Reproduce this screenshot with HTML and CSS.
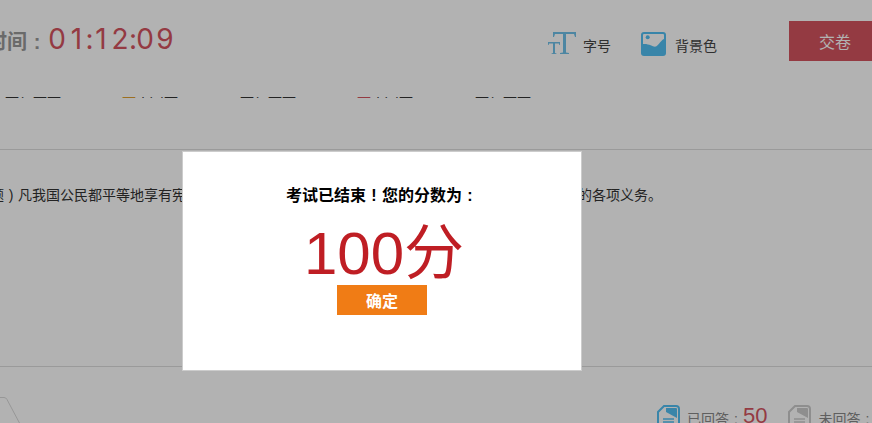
FILE: index.html
```html
<!DOCTYPE html>
<html lang="zh">
<head>
<meta charset="utf-8">
<title>考试</title>
<link rel="stylesheet" href="styles.css">
</head>
<body>
<div class="page">
  <header class="topbar">
    <div class="timer">
      <span class="timer-label">时间<span class="cw">:</span></span>
      <span class="timer-digits"><span>0</span><span>1</span><span>:</span><span>1</span><span>2</span><span>:</span><span>0</span><span>9</span></span>
    </div>
    <div class="tools">
      <div class="tool tool-size">
        <svg viewBox="0 0 28 22" width="28" height="22"><path fill="#6fc0e8" d="M5 0H28V5H27L26 2H18V20.500L21 21V22H12V21L15 20.500V2H7L6 5H5ZM0 10H12V13H11.300L11 11.500H7V21L8.500 21.500V22H3.500V21.500L5 21V11.500H1L.7 13H0Z"/></svg>
        <span>字号</span>
      </div>
      <div class="tool tool-bg">
        <svg viewBox="0 0 25 24" width="25" height="24"><rect width="25" height="24" rx="3" fill="#52bff3"/><path fill="#fff" d="M2 3a1 1 0 0 1 1-1h19a1 1 0 0 1 1 1v4c-3 1-5 6-8 7.500-3 1-6-3-13-2.500z"/><circle cx="6.700" cy="5.300" r="2" fill="#52bff3"/></svg>
        <span>背景色</span>
      </div>
    </div>
    <button class="submit">交卷</button>
  </header>
  <div class="strip">
    <div class="strip-text">
      <span>正，上正</span><span><b>上</b>小川正</span><span>正，上正</span><span><i>上</i>小川正</span><span>正，上正</span>
    </div>
  </div>
  <div class="rule"></div>
  <section class="question">（单选题<span class="cw">)</span>凡我国公民都平等地享有宪法和法律规定的各项权利，同时必须平等地履行宪法和法律规定的各项义务。</section>
  <footer class="footer">
    <svg class="tab" viewBox="0 0 24 27" width="24" height="27"><path fill="none" stroke="#d8d8d8" d="M0 .5H4Q6 .5 7 2.500L20 27"/></svg>
    <div class="stats">
      <svg class="doc doc-done" viewBox="0 0 23 26" width="23" height="26"><path class="doc-line" d="M7 1H19a3 3 0 0 1 3 3V26H1V7Z"/><path class="doc-fold" d="M9 3H19a1 1 0 0 1 1 1V13L9 7Z"/><path class="doc-rows" d="M6 14H17M6 17H17M6 20H17M6 23H17"/></svg>
      <span class="stat-label">已回答<span class="cw">:</span></span>
      <span class="stat-num">50</span>
      <svg class="doc doc-todo" viewBox="0 0 23 26" width="23" height="26"><path class="doc-line" d="M7 1H19a3 3 0 0 1 3 3V26H1V7Z"/><path class="doc-fold" d="M9 3H19a1 1 0 0 1 1 1V13L9 7Z"/><path class="doc-rows" d="M6 14H17M6 17H17M6 20H17M6 23H17"/></svg>
      <span class="stat-label">未回答<span class="cw">:</span></span>
    </div>
  </footer>
</div>
<div class="overlay"></div>
<div class="modal">
  <p class="modal-title">考试已结束<span class="cw">!</span>您的分数为<span class="cw">:</span></p>
  <p class="modal-score">100分</p>
  <button class="modal-ok">确定</button>
</div>
</body>
</html>
```
FILE: styles.css
```css
* { box-sizing: border-box; }
html, body { margin: 0; height: 100%; overflow: hidden; }
body { font-family: "Liberation Sans", "Noto Sans CJK SC", sans-serif; background: #fff; color: #333; }
.page { width: 872px; height: 423px; overflow: hidden; display: flex; flex-direction: column; }
.cw { display: inline-block; width: 1em; text-align: center; }

.topbar { height: 97px; display: flex; align-items: flex-start; flex: none; }
.timer { margin-left: -13px; margin-top: 26px; display: flex; flex: none; }
.timer-label { font-size: 20px; font-weight: bold; line-height: 32px; color: #999; white-space: nowrap; }
.timer-digits { display: grid; grid-template-columns: 20px 19px 7px 16px 22px 4px 20px 20px; justify-items: center; margin-top: -3px; font-family: Inter, sans-serif; font-size: 28px; line-height: 32px; color: #d4545f; }
.tools { display: flex; margin-left: 373px; margin-top: 32px; height: 26px; flex: none; }
.tool { display: flex; align-items: center; font-size: 14px; color: #444; }
.tool svg { align-self: flex-start; }
.tool-size { gap: 7px; }
.tool-bg { margin-left: 30px; gap: 9px; }
.submit { margin-left: auto; margin-right: -9px; margin-top: 21px; width: 92px; height: 40px; border: 0; padding: 0; background: #d4545f; color: #fff; font: 16px "Liberation Sans", "Noto Sans CJK SC", sans-serif; flex: none; }

.strip { height: 1px; flex: none; overflow: hidden; }
.strip-text { display: grid; grid-template-columns: 117px 118px 117px 118px 117px; padding-left: 5px; margin-top: -12px; font-size: 14px; line-height: 14px; white-space: nowrap; color: #333; }
.strip-text b { font-weight: normal; color: #e0a030; }
.strip-text i { font-style: normal; color: #d4545f; }
.rule { height: 52px; flex: none; border-bottom: 1px solid #ddd; }

.question { flex: 1; padding-top: 36px; margin-left: -52px; font-size: 14px; line-height: 18px; white-space: nowrap; color: #333; }

.footer { height: 57px; flex: none; border-top: 1px solid #ddd; display: flex; position: relative; }
.tab { position: absolute; left: 0; top: 30px; }
.stats { margin-left: 657px; margin-top: 38px; display: flex; align-items: flex-start; flex: none; }
.doc { flex: none; }
.doc-line { fill: none; stroke-width: 2; }
.doc-rows { fill: none; stroke-width: 1.500; }
.doc-done .doc-line, .doc-done .doc-rows { stroke: #52bff3; }
.doc-done .doc-fold { fill: #52bff3; }
.doc-todo .doc-line, .doc-todo .doc-rows { stroke: #ccc; }
.doc-todo .doc-fold { fill: #ccc; }
.stat-label { font-size: 14px; line-height: 28px; color: #888; margin-left: 7px; white-space: nowrap; }
.stat-num { font-size: 22px; line-height: 22px; color: #d4545f; margin-right: 21px; }

.overlay { position: fixed; inset: 0; background: rgba(0,0,0,.3); }
.modal { position: fixed; left: 182px; top: 151px; width: 400px; height: 220px; background: #fff; border: 1px solid #ccc; text-align: center; }
.modal-title { margin: 35px 0 0; font-size: 16px; font-weight: bold; line-height: 18px; color: #000; }
.modal-score { margin: 18px 0 0; padding-left: 4px; font-size: 60px; line-height: 62px; color: #bf1e24; }
.modal-ok { display: block; margin: 0 auto; width: 90px; height: 30px; border: 0; padding: 0; background: #f07c15; color: #fff; font: bold 16px "Liberation Sans", "Noto Sans CJK SC", sans-serif; }
```
